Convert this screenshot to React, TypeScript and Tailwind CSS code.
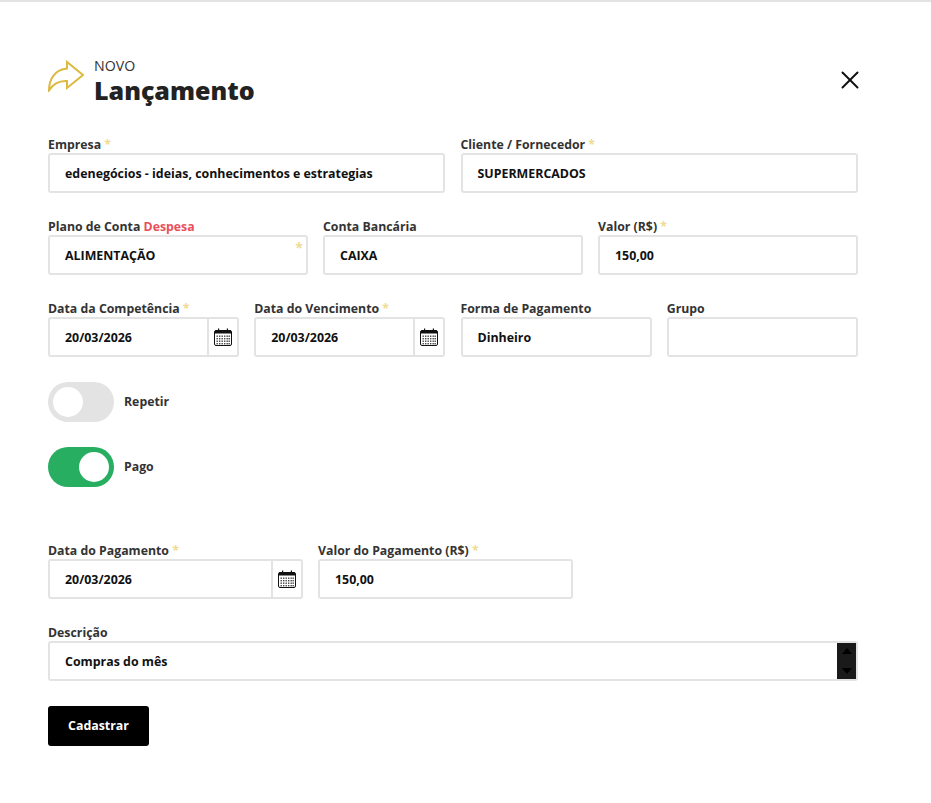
import React from 'react';
import { X } from 'lucide-react';

const Star = () => <span className="text-[#eedb91]"> *</span>;

const Label = ({ children }: { children: React.ReactNode }) => (
  <label className="block h-[18px] text-[12.3px] leading-[20px] font-bold text-[#333] whitespace-nowrap">{children}</label>
);

const boxClass = 'h-10 w-full rounded-[3px] border-2 border-[#e3e3e3] bg-white';

const Text = ({ value }: { value?: string }) => (
  <div className={`${boxClass} pl-[15px] text-[12.4px] leading-[38px] font-bold text-[#111] whitespace-nowrap overflow-hidden`}>{value}</div>
);

const CalendarIcon = () => (
  <svg width="18" height="18" viewBox="0 0 18 18" fill="none">
    <rect x="0.5" y="2.5" width="17" height="15" rx="1.5" stroke="#111" />
    <rect x="1" y="2.5" width="16" height="3" fill="#111" />
    <rect x="4" y="0.5" width="1.2" height="3.5" fill="#111" />
    <rect x="12.8" y="0.5" width="1.2" height="3.5" fill="#111" />
    {[7.5, 10, 12.5, 15].map((y) =>
      [2.5, 5, 7.5, 10, 12.5, 14.5].map((x) => <rect key={`${x}-${y}`} x={x} y={y} width="1.4" height="1.4" fill="#444" />)
    )}
  </svg>
);

const DateInput = ({ value }: { value: string }) => (
  <div className={`${boxClass} flex`}>
    <div className="flex-1 pl-[15px] text-[12.4px] leading-[38px] font-bold text-[#111]">{value}</div>
    <div className="flex w-[30px] items-center justify-center border-l-2 border-[#e3e3e3]">
      <CalendarIcon />
    </div>
  </div>
);

const Toggle = ({ on, label }: { on?: boolean; label: string }) => (
  <div className="flex items-center gap-[10px]">
    <div className={`flex h-10 w-[66px] items-center rounded-full px-[5px] ${on ? 'justify-end bg-[#27ae60]' : 'justify-start bg-[#e3e3e3]'}`}>
      <div className="h-[30px] w-[30px] rounded-full bg-white" />
    </div>
    <span className="text-[12.3px] font-bold text-[#333]">{label}</span>
  </div>
);

export default function App() {
  return (
    <div className="min-h-[803px] border-t-2 border-[#e3e3e3] bg-white pt-[58px] pl-[48px] pr-[73px] font-['Open_Sans',sans-serif]">
      <header className="flex items-start justify-between">
        <div className="flex items-start gap-[10px]">
          <svg width="36" height="32" viewBox="0 0 36 32" fill="none">
            <path d="M1 30.5 C1 19 7 9.5 19 8.5 L19 2 L35 15 L19 28 L19 21 C11 20.5 5 24 1 30.5 Z" stroke="#dcb93f" strokeWidth="2" strokeLinejoin="miter" />
          </svg>
          <div>
            <div className="-mt-px text-[14.2px] leading-[14px] text-[#333]">NOVO</div>
            <div className="mt-px text-[25px] leading-[33px] font-extrabold text-[#222]">Lançamento</div>
          </div>
        </div>
        <X size={30} strokeWidth={1.6} color="#111" className="mt-[5px] -mr-[7px]" />
      </header>

      <main className="mt-[28px]">
        <div className="grid grid-cols-12 gap-x-[15px] gap-y-6">
          <div className="col-span-6 pr-[0.5px]">
            <Label>Empresa<Star /></Label>
            <Text value="edenegócios - ideias, conhecimentos e estrategias" />
          </div>
          <div className="col-span-6">
            <Label>Cliente / Fornecedor<Star /></Label>
            <Text value="SUPERMERCADOS" />
          </div>

          <div className="col-span-4">
            <Label>Plano de Conta <span className="text-[#e8505b]">Despesa</span></Label>
            <div className="relative">
              <Text value="ALIMENTAÇÃO" />
              <span className="absolute right-[5px] top-[2px] text-[14px] font-bold text-[#eedb91]">*</span>
            </div>
          </div>
          <div className="col-span-4">
            <Label>Conta Bancária</Label>
            <Text value="CAIXA" />
          </div>
          <div className="col-span-4">
            <Label>Valor (R$)<Star /></Label>
            <Text value="150,00" />
          </div>

          <div className="col-span-3">
            <Label>Data da Competência<Star /></Label>
            <DateInput value="20/03/2026" />
          </div>
          <div className="col-span-3 pr-[0.5px]">
            <Label>Data do Vencimento<Star /></Label>
            <DateInput value="20/03/2026" />
          </div>
          <div className="col-span-3">
            <Label>Forma de Pagamento</Label>
            <Text value="Dinheiro" />
          </div>
          <div className="col-span-3">
            <Label>Grupo</Label>
            <Text />
          </div>
        </div>

        <div className="mt-[25px] flex flex-col gap-[25px]">
          <Toggle label="Repetir" />
          <Toggle on label="Pago" />
        </div>

        <div className="mt-[54px] flex gap-[15px]">
          <div className="w-[255px]">
            <Label>Data do Pagamento<Star /></Label>
            <DateInput value="20/03/2026" />
          </div>
          <div className="w-[255px]">
            <Label>Valor do Pagamento (R$)<Star /></Label>
            <Text value="150,00" />
          </div>
        </div>

        <div className="mt-6">
          <Label>Descrição</Label>
          <div className="relative">
            <Text value="Compras do mês" />
            <div className="absolute right-[2px] top-[2px] flex h-9 w-[19px] flex-col items-center justify-between bg-[#1a1a1a] py-[5px]">
              <span className="h-0 w-0 border-x-[5px] border-b-[6px] border-x-transparent border-b-black" />
              <span className="h-0 w-0 border-x-[5px] border-t-[6px] border-x-transparent border-t-black" />
            </div>
          </div>
        </div>

        <button className="mt-[25px] h-10 w-[101px] rounded-[3px] bg-black text-[12.4px] font-bold text-white">Cadastrar</button>
      </main>
    </div>
  );
}
